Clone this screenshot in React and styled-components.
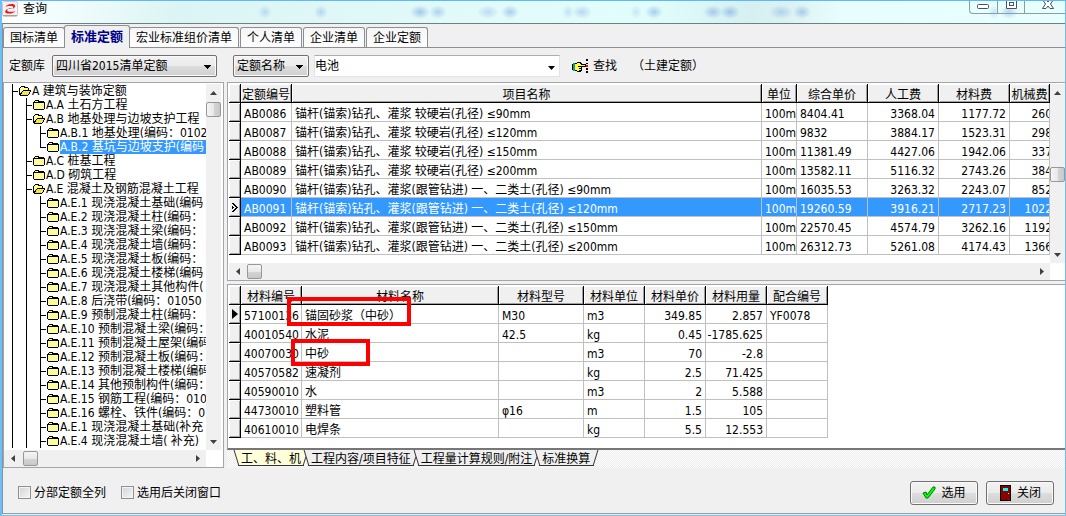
import React from "react";
import styled, { createGlobalStyle, css } from "styled-components";

const Global = createGlobalStyle`
  * { box-sizing: border-box; }
  body { margin: 0; }
  body, button, input, select, table {
    font-family: "DejaVu Sans Condensed", "Noto Sans CJK SC", sans-serif;
    font-size: 12px;
    line-height: 14px;
    color: #000;
  }
  button { padding: 0; border: 0; background: none; }
`;

/* ---------- window frame ---------- */
const Window = styled.div`
  min-height: 100vh;
  display: flex;
  flex-direction: column;
  border: 1px solid #6cc0f8;
  border-left-width: 2px;
  border-top-color: #5db8ff;
  background: #f0f0f0;
`;
const TitleBar = styled.header`
  height: 23px;
  display: flex;
  align-items: flex-start;
  border-bottom: 1px solid #6f7f82;
  overflow: hidden;
  background: ${({ $spots }) =>
    $spots.map(([x, w, a]) => `radial-gradient(ellipse ${w}px 7px at ${x}px 11px, rgba(100,150,220,${a}), transparent)`).join(",")},
    linear-gradient(100deg, #fff 0, #f2fdfd 60px, #dcf5f4 170px, #e2fbfa 480px, #e0fdfc 640px, #d6f0f1 740px, #dcf2f3 780px, #e8fefe 830px, #e6ffff 100%);
`;
const Title = styled.h1`
  flex: 1;
  margin: 0;
  padding: 1px 0 0 4px;
  font-size: 12px;
  line-height: 14px;
  font-weight: 400;
`;
const CaptionButtons = styled.div`
  display: flex;
  height: 13px;
  border: 1px solid #8d9ea3;
  border-top: 0;
  border-right: 0;
  border-bottom-left-radius: 4px;
`;
const CaptionButton = styled.button`
  width: ${({ $wide }) => ($wide ? 41 : 27)}px;
  display: flex;
  justify-content: center;
  padding-left: ${({ $wide }) => ($wide ? 6 : 0)}px;
  & + & { border-left: 1px solid #8d9ea3; }
`;

/* ---------- page tabs ---------- */
const Client = styled.div`
  flex: 1;
  display: flex;
  flex-direction: column;
  border-left: 1px solid #8a9396;
  border-bottom: 1px solid #9b9b9b;
  margin-bottom: 1px;
`;
const Tabs = styled.nav`
  display: flex;
  align-items: flex-end;
  gap: 1px;
  height: 24px;
  border-bottom: 1px solid #8c8e94;
`;
const Tab = styled.button`
  height: 20px;
  padding: 0 6px;
  border: 1px solid #8c8e94;
  border-bottom: 0;
  border-radius: 3px 3px 0 0;
  background: linear-gradient(#f5f5f5, #fff);
  ${({ $active }) => $active && css`
    height: 23px;
    margin: 0 -2px -1px;
    font-size: 13px;
    font-weight: 700;
    color: #00008b;
    background: #f0f0f0;
  `}
`;

/* ---------- toolbar ---------- */
const Toolbar = styled.div`
  display: flex;
  align-items: center;
  height: 34px;
  padding: 2px 0 0 6px;
`;
const FieldLabel = styled.label`
  width: 43px;
`;
const SelectBox = styled.select`
  appearance: none;
  width: ${({ $width }) => $width}px;
  height: 22px;
  margin-right: ${({ $after }) => $after}px;
  padding: 0 16px 0 3px;
  border: 1px solid #707070;
  border-radius: 2px;
  box-shadow: inset 0 0 0 1px #fafafa;
  background:
    linear-gradient(#000, #000) right 5px top 9px / 7px 1px no-repeat,
    linear-gradient(#000, #000) right 6px top 10px / 5px 1px no-repeat,
    linear-gradient(#000, #000) right 7px top 11px / 3px 1px no-repeat,
    linear-gradient(#000, #000) right 8px top 12px / 1px 1px no-repeat,
    linear-gradient(#f2f2f2, #ebebeb 50%, #dddddd 51%, #cfcfcf);
`;
const Combo = styled.div`
  display: flex;
  width: 246px;
  height: 22px;
  border: 1px solid #e2e3ea;
  border-top-color: #abadb3;
  background: #fff;
`;
const ComboInput = styled.input`
  flex: 1;
  min-width: 0;
  border: 0;
  padding: 0;
  background: transparent;
  outline: 0;
`;
const ComboButton = styled.button`
  width: 15px;
`;
const FindButton = styled.button`
  display: flex;
  align-items: center;
  gap: 4px;
  margin: 0 15px 0 12px;
`;

/* ---------- panes ---------- */
const Body = styled.main`
  flex: 1;
  display: flex;
  gap: 3px;
`;
const Pane = styled.section`
  position: relative;
  display: flex;
  flex-direction: column;
  border: 1px solid #a3a5ac;
  padding-top: 1px;
  background: #fff;
`;
const TreePane = styled(Pane)`
  width: 221px;
  flex: none;
  padding-right: 2px;
`;
const Right = styled.div`
  flex: 1;
  min-width: 0;
  display: flex;
  flex-direction: column;
`;
const GridPane = styled(Pane)`
  padding-left: 1px;
  border-right: 0;
  margin-bottom: 3px;
`;
const DetailPane = styled(GridPane)`
  flex: 1;
  margin-bottom: 0;
  padding-bottom: 10px;
  border-bottom: 2px solid #777;
`;
const PaneRow = styled.div`
  flex: 1;
  display: flex;
`;

/* ---------- scroll bars ---------- */
const Bar = styled.div`
  flex: none;
  display: flex;
  flex-direction: ${({ $vertical }) => ($vertical ? "column" : "row")};
  ${({ $vertical }) => ($vertical ? "width: 15px;" : "height: 17px; margin-right: 15px;")}
  background: #f0f0f0;
`;
const BarArrow = styled.button`
  flex: none;
  width: ${({ $vertical }) => ($vertical ? 15 : 17)}px;
  height: 17px;
  display: grid;
  place-items: center;
`;
const BarTrack = styled.div`
  flex: 1;
  display: flex;
  ${({ $vertical, $offset }) =>
    $vertical ? `flex-direction: column; padding-top: ${$offset}px;` : `padding: 1px 0 0 ${$offset}px;`}
`;
const Thumb = styled.div`
  width: 15px;
  height: 15px;
  border: 1px solid #979797;
  border-radius: 2px;
  background: linear-gradient(${({ $vertical }) => ($vertical ? "to right" : "to bottom")}, #f5f5f5, #e8e8e8 50%, #d5d5d5 51%, #c8c8c8);
`;
const ARROWS = {
  up: "M0 6 3.5 2 7 6Z",
  down: "M0 2 3.5 6 7 2Z",
  left: "M6 0 2 3.5 6 7Z",
  right: "M2 0 6 3.5 2 7Z",
};
const Arrow = ({ dir }) => (
  <svg width="7" height="7" aria-hidden="true"><path d={ARROWS[dir]} fill="#404040" /></svg>
);
const ScrollBar = ({ vertical, offset }) => (
  <Bar $vertical={vertical}>
    <BarArrow $vertical={vertical} aria-label={vertical ? "向上" : "向左"}><Arrow dir={vertical ? "up" : "left"} /></BarArrow>
    <BarTrack $vertical={vertical} $offset={offset}><Thumb $vertical={vertical} /></BarTrack>
    <BarArrow $vertical={vertical} aria-label={vertical ? "向下" : "向右"}><Arrow dir={vertical ? "down" : "right"} /></BarArrow>
  </Bar>
);

/* ---------- tree ---------- */
const Tree = styled.ul`
  flex: 1;
  min-width: 0;
  margin: 0;
  padding: 0 0 0 8px;
  overflow: hidden;
  list-style: none;
`;
const Node = styled.li`
  display: flex;
  height: 14px;
  white-space: pre;
`;
const Guide = styled.span`
  flex: none;
  width: 14px;
  border-left: 1px solid #000;
`;
const Branch = styled.span`
  flex: none;
  width: 6px;
  background:
    linear-gradient(#000, #000) 0 0 / 1px ${({ $last }) => ($last ? "7px" : "14px")} no-repeat,
    linear-gradient(#000, #000) 0 7px / 6px 1px no-repeat;
`;
const NodeText = styled.span`
  flex: 1 0 auto;
  ${({ $selected }) => $selected && "background: #3399ff; color: #fff;"}
`;
const FolderIcon = styled.svg`
  flex: none;
  width: 14px;
  height: 14px;
`;
const Folder = ({ open }) => (
  <FolderIcon viewBox="0 0 14 14" shapeRendering="crispEdges" aria-hidden="true">
    {open ? (
      <>
        <path d="M1 11V4H2V3H3V2H7V3H10V4H11V6H13V8H12V10H11V11H10V12H2V11Z" fill="#000" />
        <path d="M3 3H6V4H10V6H5V7H4V8H3V9H2V4H3Z" fill="#ffff99" />
        <path d="M5 7H12V8H11V10H10V11H3V10H4V8H5Z" fill="#f2e22e" />
        <path d="M6 7.5H11M5 9.5H10" stroke="#fff8a0" strokeDasharray="1 1" />
      </>
    ) : (
      <>
        <path d="M2 3H3V2H7V3H12V4H13V11H12V12H2V11H1V4H2Z" fill="#000" />
        <path d="M3 3H6V4H3ZM2 5H12V11H2Z" fill="#ffff66" />
        <path d="M2 5.5H12M2 7.5H12M2 9.5H12" stroke="#fffbd0" strokeDasharray="1 1" />
        <path d="M3 6.5H12M3 8.5H12M3 10.5H12" stroke="#fffbd0" strokeDasharray="1 1" />
      </>
    )}
  </FolderIcon>
);

/* ---------- grids ---------- */
const TableClip = styled.div`
  flex: 1;
  min-width: 0;
  overflow: hidden;
  padding-bottom: ${({ $space }) => $space || 0}px;
`;
const Grid = styled.table`
  width: ${({ $fluid }) => ($fluid ? "100%" : "599px")};
  table-layout: fixed;
  border-collapse: separate;
  border-spacing: 0;
`;
const bevel = css`
  background: #f0f0f0;
  border-right: 1px solid #000;
  border-bottom: 1px solid #000;
  box-shadow: inset 1px 1px #fff, inset -1px -1px #a0a0a0;
`;
const HeadCell = styled.th`
  height: 19px;
  padding: 4px 0 0;
  font-weight: 400;
  white-space: nowrap;
  overflow: hidden;
  ${bevel}
`;
const MarkCell = styled.td`
  height: 19px;
  padding: 0;
  line-height: 0;
  text-align: center;
  ${bevel}
`;
const Cell = styled.td`
  height: 19px;
  padding: 4px 3px 0;
  ${({ $num }) => ($num ? "padding-left: 0; text-align: right;" : "padding-right: 0; text-align: left;")}
  white-space: pre;
  overflow: hidden;
  border-right: 1px solid #c0c0c0;
  border-bottom: 1px solid #c0c0c0;
`;
const Row = styled.tr`
  ${({ $selected }) => $selected && css`${Cell} { background: #3399ff; color: #fff; }`}
`;
const Cut = styled.span`
  display: block;
  width: 39px;
  text-align: right;
`;
const Highlight = styled.div`
  position: absolute;
  left: ${({ $x }) => $x}px;
  top: ${({ $y }) => $y}px;
  width: ${({ $w }) => $w}px;
  height: ${({ $h }) => $h}px;
  border: 4px solid #f00;
  pointer-events: none;
`;

/* ---------- sheet tabs ---------- */
const Sheets = styled.nav`
  display: flex;
  height: 18px;
  padding-left: 9px;
  background: repeating-conic-gradient(#fff 0 25%, #ececec 0 50%) 0 0 / 2px 2px;
`;
const Sheet = styled.button`
  position: relative;
  isolation: isolate;
  height: 16px;
  padding: 2px 5px 0;
  &::before, &::after {
    content: "";
    position: absolute;
    z-index: -1;
    top: 0;
    bottom: 0;
    border-bottom: 1px solid #333;
    background: ${({ $active }) => ($active ? "#ffffd9" : "#f0f0f0")};
  }
  &::before { left: 0; right: 50%; border-left: 1px solid #333; transform: skewX(17deg); }
  &::after { left: 40%; right: 0; border-right: 1px solid #333; transform: skewX(-17deg); }
`;

/* ---------- footer ---------- */
const Footer = styled.footer`
  display: flex;
  align-items: center;
  height: 45px;
  padding: 4px 11px 0 15px;
`;
const Check = styled.label`
  display: flex;
  align-items: center;
  gap: 3px;
  margin-right: 15px;
`;
const CheckBox = styled.input`
  appearance: none;
  width: 13px;
  height: 13px;
  margin: 0;
  border: 1px solid #8e8f8f;
  box-shadow: inset 0 0 0 1px #f4f4f4;
  background: linear-gradient(135deg, #cfd3d8, #f6f6f6);
`;
const Actions = styled.div`
  display: flex;
  gap: 8px;
  margin-left: auto;
`;
const Action = styled.button`
  display: flex;
  align-items: center;
  justify-content: center;
  gap: 5px;
  width: 68px;
  height: 24px;
  border: 1px solid #707070;
  border-radius: 3px;
  box-shadow: inset 0 0 0 1px #fafafa;
  background: linear-gradient(#f2f2f2, #ebebeb 50%, #dddddd 51%, #cfcfcf);
`;

/* ---------- data ---------- */
const SPOTS = [
  [263, 7, 0.3], [319, 7, 0.35], [418, 10, 0.5], [436, 9, 0.4], [486, 11, 0.3], [508, 9, 0.45],
  [566, 6, 0.25], [580, 10, 0.35], [634, 6, 0.2], [652, 9, 0.45], [711, 10, 0.45], [728, 10, 0.5],
  [779, 12, 0.35], [800, 9, 0.45], [992, 6, 0.25], [1007, 9, 0.4],
];
const TABS = ["国标清单", "标准定额", "宏业标准组价清单", "个人清单", "企业清单", "企业定额"];
const NODES = [
  [0, "A 建筑与装饰定额", "open"],
  [1, "A.A 土石方工程"],
  [1, "A.B 地基处理与边坡支护工程", "open"],
  [2, "A.B.1 地基处理(编码：0102"],
  [2, "A.B.2 基坑与边坡支护(编码", "last"],
  [1, "A.C 桩基工程"],
  [1, "A.D 砌筑工程"],
  [1, "A.E 混凝土及钢筋混凝土工程", "open"],
  [2, "A.E.1 现浇混凝土基础(编码"],
  [2, "A.E.2 现浇混凝土柱(编码："],
  [2, "A.E.3 现浇混凝土梁(编码："],
  [2, "A.E.4 现浇混凝土墙(编码："],
  [2, "A.E.5 现浇混凝土板(编码："],
  [2, "A.E.6 现浇混凝土楼梯(编码"],
  [2, "A.E.7 现浇混凝土其他构件("],
  [2, "A.E.8 后浇带(编码：01050"],
  [2, "A.E.9 预制混凝土柱(编码："],
  [2, "A.E.10 预制混凝土梁(编码："],
  [2, "A.E.11 预制混凝土屋架(编码"],
  [2, "A.E.12 预制混凝土板(编码："],
  [2, "A.E.13 预制混凝土楼梯(编码"],
  [2, "A.E.14 其他预制构件(编码："],
  [2, "A.E.15 钢筋工程(编码：010"],
  [2, "A.E.16 螺栓、铁件(编码：0"],
  [2, "A.E.1 现浇混凝土基础(补充"],
  [2, "A.E.4 现浇混凝土墙( 补充)"],
];
const HARD = "锚杆(锚索)钻孔、灌浆 较硬岩(孔径) ";
const SOIL = "锚杆(锚索)钻孔、灌浆(跟管钻进) 一、二类土(孔径) ";
const QUOTAS = [
  ["AB0086", HARD + "≤90mm", "8404.41", "3368.04", "1177.72", "260"],
  ["AB0087", HARD + "≤120mm", "9832", "3884.17", "1523.31", "298"],
  ["AB0088", HARD + "≤150mm", "11381.49", "4427.06", "1942.06", "337"],
  ["AB0089", HARD + "≤200mm", "13582.11", "5116.32", "2743.26", "384"],
  ["AB0090", SOIL + "≤90mm", "16035.53", "3263.32", "2243.07", "852"],
  ["AB0091", SOIL + "≤120mm", "19260.59", "3916.21", "2717.23", "1022"],
  ["AB0092", SOIL + "≤150mm", "22570.45", "4574.79", "3262.16", "1192"],
  ["AB0093", SOIL + "≤200mm", "26312.73", "5261.08", "4174.43", "1366"],
];
const MATERIALS = [
  ["57100136", "锚固砂浆（中砂）", "M30", "m3", "349.85", "2.857", "YF0078"],
  ["40010540", "水泥", "42.5", "kg", "0.45", "-1785.625", ""],
  ["40070030", "中砂", "", "m3", "70", "-2.8", ""],
  ["40570582", "速凝剂", "", "kg", "2.5", "71.425", ""],
  ["40590010", "水", "", "m3", "2", "5.588", ""],
  ["44730010", "塑料管", "φ16", "m", "1.5", "105", ""],
  ["40610010", "电焊条", "", "kg", "5.5", "12.553", ""],
];
const SHEETS = ["工、料、机", "工程内容/项目特征", "工程量计算规则/附注", "标准换算"];

const Column = styled.col`
  ${({ $width }) => $width && `width: ${$width}px;`}
`;
const Columns = ({ widths }) => (
  <colgroup>{widths.map((w, i) => <Column key={i} $width={w} />)}</colgroup>
);
const Head = ({ labels }) => (
  <thead>
    <tr>{["", ...labels].map((l, i) => <HeadCell key={i} scope="col">{l}</HeadCell>)}</tr>
  </thead>
);

const Logo = () => (
  <svg width="17" height="17" viewBox="0 0 17 17" aria-hidden="true">
    <rect x="0.5" y="0.5" width="15" height="15" rx="2" fill="#f6f1ef" stroke="#cfc8c5" />
    <path d="M1 14.5H15" stroke="#aaa09c" />
    <path d="M3 6C5 3.2 9 2.6 11.5 3.2C14.2 4 13.5 6.5 10.5 8C11.8 6 11.5 5.2 9.5 5C7 4.8 4.8 5 3 6Z" fill="#e01b22" />
    <path d="M13.5 10C11.5 12.4 7.5 13 5 12.4C2.2 11.6 2.8 9.2 6 7.8C4.6 9.6 4.9 10.4 7 10.7C9.3 11 11.8 10.8 13.5 10Z" fill="#e01b22" />
    <path d="M6.5 7.5H9.5" stroke="#8798b8" strokeWidth="1" />
  </svg>
);
const Hand = () => (
  <svg width="17" height="15" viewBox="0 0 17 15" shapeRendering="crispEdges" aria-hidden="true">
    <path d="M1 4H3V12H1Z" fill="#00a0a0" />
    <path d="M0 5H1V11H0Z" fill="#000" />
    <path d="M3 4H5V3H9V4H10V5H14V8H10V12H9V13H5V12H3Z" fill="#000" />
    <path d="M3 5H5V4H8V5H9V6H13V7H9V8H9V12H5V11H3Z" fill="#ffff33" />
    <path d="M6 7.5H9M7 9.5H9M7 11.5H9" stroke="#000" />
    <path d="M14 0H16V2H14ZM14 4H16V5H14ZM14 9H16V11H14ZM14 12H16V14H14Z" fill="#000" />
    <path d="M14 6H16V8H14Z" fill="#f00" />
  </svg>
);

export default function App() {
  return (
    <Window>
      <Global />
      <TitleBar $spots={SPOTS}>
        <Logo />
        <Title>查询</Title>
        <CaptionButtons>
          <CaptionButton aria-label="最小化">
            <svg width="13" height="12"><rect x="0.5" y="3.5" width="11" height="4" rx="1" fill="#fff" stroke="#4a4f66" /></svg>
          </CaptionButton>
          <CaptionButton aria-label="最大化">
            <svg width="13" height="12"><path d="M1.5 -1V7.5H11.5V-1" fill="#fff" stroke="#4a4f66" /><rect x="4.5" y="1.5" width="4" height="3" fill="#e6ffff" stroke="#4a4f66" /></svg>
          </CaptionButton>
          <CaptionButton $wide aria-label="关闭">
            <svg width="14" height="12"><path d="M1.5 -1.5H5L7 1 9 -1.5H12.5L9.5 3 12.5 7.5H9L7 5 5 7.5H1.5L4.5 3Z" fill="#fff" stroke="#4a4f66" /></svg>
          </CaptionButton>
        </CaptionButtons>
      </TitleBar>

      <Client>
        <Tabs>{TABS.map((t, i) => <Tab key={t} $active={i === 1}>{t}</Tab>)}</Tabs>
        <Toolbar>
          <FieldLabel htmlFor="library">定额库</FieldLabel>
          <SelectBox id="library" $width={165} $after={16}><option>四川省2015清单定额</option></SelectBox>
          <SelectBox aria-label="查询字段" $width={76} $after={5}><option>定额名称</option></SelectBox>
          <Combo>
            <ComboInput aria-label="查询内容" defaultValue="电池" />
            <ComboButton aria-label="展开">
              <svg width="7" height="4"><path d="M0 0H7L3.5 4Z" /></svg>
            </ComboButton>
          </Combo>
          <FindButton><Hand />查找</FindButton>
          <span>（土建定额）</span>
        </Toolbar>

        <Body>
          <TreePane>
            <PaneRow>
              <Tree>
                {NODES.map(([depth, text, kind], i) => (
                  <Node key={i}>
                    {Array.from({ length: depth }, (_, d) => <Guide key={d} />)}
                    <Branch $last={kind === "last"} />
                    <Folder open={kind === "open"} />
                    <NodeText $selected={kind === "last"}>{text}</NodeText>
                  </Node>
                ))}
              </Tree>
              <ScrollBar vertical offset={1} />
            </PaneRow>
            <ScrollBar offset={2} />
          </TreePane>

          <Right>
            <GridPane>
              <PaneRow>
                <TableClip $space={8}>
                  <Grid $fluid>
                    <Columns widths={[12, 51, 0, 35, 71, 71, 71, 40]} />
                    <Head labels={["定额编号", "项目名称", "单位", "综合单价", "人工费", "材料费", "机械费"]} />
                    <tbody>
                      {QUOTAS.map(([code, name, price, labour, material, machine]) => (
                        <Row key={code} $selected={code === "AB0091"}>
                          <MarkCell>
                            {code === "AB0091" && (
                              <svg width="8" height="9" shapeRendering="crispEdges">
                                <path d="M1 0H3V1H4V2H5V3H6V4H7V5H6V6H5V7H4V8H3V9H1V8H2V7H3V6H4V5H5V4H4V3H3V2H2V1H1Z" />
                                <path d="M1 3H2V4H3V5H2V6H1Z" />
                              </svg>
                            )}
                          </MarkCell>
                          <Cell>{code}</Cell>
                          <Cell>{name}</Cell>
                          <Cell>100m</Cell>
                          <Cell>{price}</Cell>
                          <Cell $num>{labour}</Cell>
                          <Cell $num>{material}</Cell>
                          <Cell><Cut>{machine}</Cut></Cell>
                        </Row>
                      ))}
                    </tbody>
                  </Grid>
                </TableClip>
                <ScrollBar vertical offset={66} />
              </PaneRow>
              <ScrollBar offset={1} />
            </GridPane>

            <DetailPane>
              <TableClip>
                <Grid>
                  <Columns widths={[12, 61, 197, 85, 61, 61, 61, 61]} />
                  <Head labels={["材料编号", "材料名称", "材料型号", "材料单位", "材料单价", "材料用量", "配合编号"]} />
                  <tbody>
                    {MATERIALS.map((row, r) => (
                      <Row key={row[0]}>
                        <MarkCell>
                          {r === 0 && <svg width="6" height="10"><path d="M0 0 6 5 0 10Z" /></svg>}
                        </MarkCell>
                        {row.map((v, c) => <Cell key={c} $num={c === 4 || c === 5}>{v}</Cell>)}
                      </Row>
                    ))}
                  </tbody>
                </Grid>
              </TableClip>
              <Highlight $x={59} $y={12} $w={124} $h={29} />
              <Highlight $x={63} $y={54} $w={79} $h={27} />
            </DetailPane>
            <Sheets>{SHEETS.map((s, i) => <Sheet key={s} $active={i === 0}>{s}</Sheet>)}</Sheets>
          </Right>
        </Body>

        <Footer>
          <Check><CheckBox type="checkbox" />分部定额全列</Check>
          <Check><CheckBox type="checkbox" />选用后关闭窗口</Check>
          <Actions>
            <Action>
              <svg width="14" height="13"><path d="M1 7 4 6 5 9 11 1 13 1 13 3 6 12 4 12Z" fill="#0f0" stroke="#007a00" /></svg>
              选用
            </Action>
            <Action>
              <svg width="13" height="16" shapeRendering="crispEdges">
                <rect x="1" y="0" width="11" height="16" fill="#000" />
                <rect x="2" y="1" width="9" height="14" fill="#8b0000" />
                <rect x="4" y="3" width="5" height="3" fill="#0ff" />
                <rect x="9" y="8" width="1" height="1" fill="#ff0" />
              </svg>
              关闭
            </Action>
          </Actions>
        </Footer>
      </Client>
    </Window>
  );
}
